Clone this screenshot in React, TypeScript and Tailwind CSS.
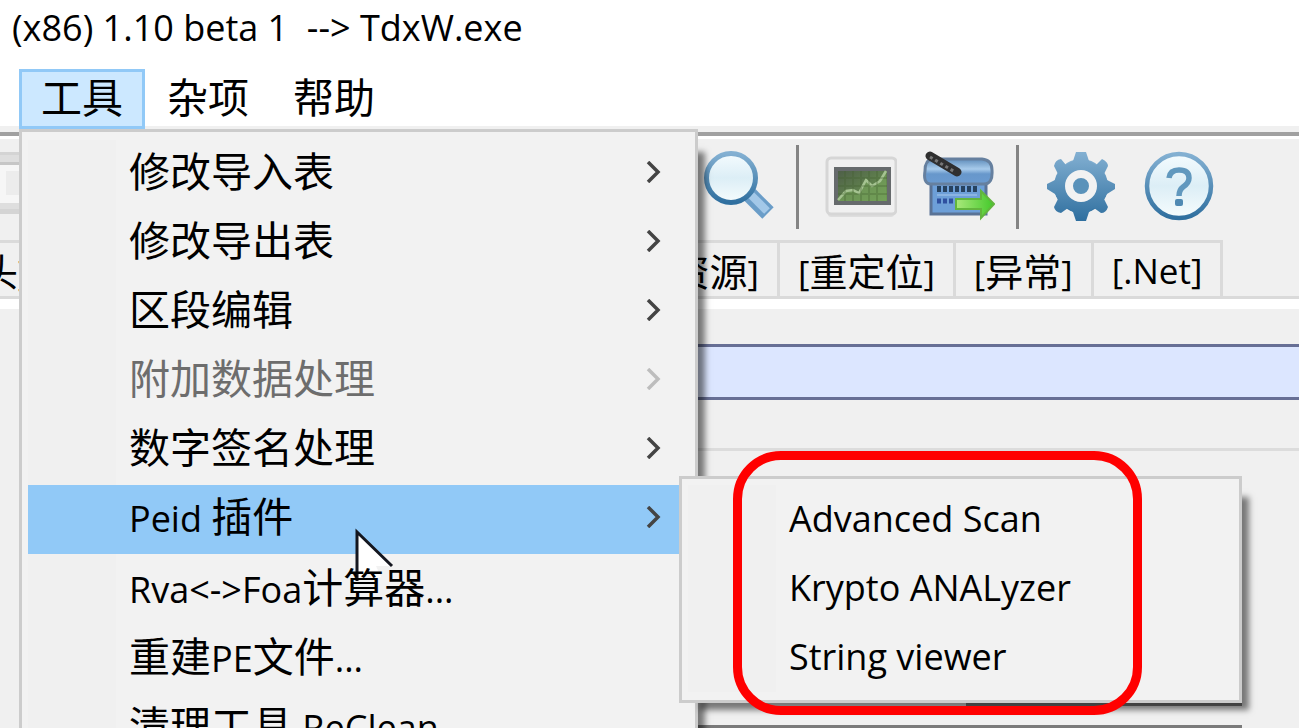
import type { ReactNode } from "react";

type Item = {
  label: string;
  sub?: boolean;
  disabled?: boolean;
  active?: boolean;
};

const MENUS = ["工具", "杂项", "帮助"];

const ITEMS: Item[] = [
  { label: "修改导入表", sub: true },
  { label: "修改导出表", sub: true },
  { label: "区段编辑", sub: true },
  { label: "附加数据处理", sub: true, disabled: true },
  { label: "数字签名处理", sub: true },
  { label: "Peid 插件", sub: true, active: true },
  { label: "Rva<->Foa计算器..." },
  { label: "重建PE文件..." },
  { label: "清理工具 ReClean" },
];

const PLUGINS = ["Advanced Scan", "Krypto ANALyzer", "String viewer"];

// Chinese glyphs are set larger than the latin ones next to them
function Label({ text, cjk = "text-[41px]" }: { text: string; cjk?: string }) {
  return (
    <>
      {text.split(/([\u4e00-\u9fff]+)/).map((part, i) => (
        <span key={i} className={i % 2 ? cjk : undefined}>
          {part}
        </span>
      ))}
    </>
  );
}

function Chevron() {
  return (
    <svg viewBox="0 0 16 22" className="h-[22px] w-4 shrink-0" fill="none" stroke="currentColor" strokeWidth="3.5">
      <path d="M2 1 L12 11 L2 21" />
    </svg>
  );
}

function MenuRow({ item }: { item: Item }) {
  return (
    <button
      disabled={item.disabled}
      className={`flex h-[69px] w-full items-center pr-[27px] text-left ${item.active ? "bg-[#91c9f7]" : ""} ${
        item.disabled ? "text-[#6d6d6d]" : "text-black"
      }`}
    >
      <span className={`mr-[13px] w-[88px] shrink-0 self-stretch ${item.active ? "" : "bg-[#f0f0f0]"}`} />
      <span className={`relative z-20 flex-1 whitespace-pre ${item.sub ? "pb-1.5" : "pb-0.5"}`}>
        <Label text={item.label} />
      </span>
      {item.sub && (
        <span className={`pb-1.5 ${item.disabled ? "text-[#bdbdbd]" : "text-[#444]"}`}>
          <Chevron />
        </span>
      )}
    </button>
  );
}

function ToolButton({ label, children }: { label: string; children: ReactNode }) {
  return (
    <button aria-label={label} className="ml-[26px] shrink-0">
      <svg viewBox="0 0 72 72" className="size-[72px]">
        {children}
      </svg>
    </button>
  );
}

function Separator() {
  return <div className="ml-[21px] h-[84px] w-[3px] shrink-0 bg-[#848484]" />;
}

function Toolbar() {
  return (
    <div className="flex h-[101px] items-center bg-[#f0f0f0] pb-[5px]">
      <svg viewBox="0 0 72 72" className="-ml-[46px] mr-[651px] size-[72px] shrink-0">
        <rect x="2" y="1" width="70" height="62" rx="4" fill="#d4d4d4" />
        <rect x="4" y="4" width="68" height="54" fill="#dedede" />
        <rect x="2" y="11" width="70" height="3" fill="#c6c6c6" />
        <rect x="8" y="14" width="60" height="38" fill="#f6f6f6" />
        <rect x="52" y="20" width="20" height="24" fill="#ececec" />
      </svg>

      <ToolButton label="搜索">
        <defs>
          <linearGradient id="glass" x1="0" y1="0" x2="0" y2="1">
            <stop offset="0" stopColor="#f4fbfe" />
            <stop offset="0.5" stopColor="#dceef6" />
            <stop offset="1" stopColor="#f6fcfd" />
          </linearGradient>
          <linearGradient id="blue" x1="0" y1="0" x2="0" y2="1">
            <stop offset="0" stopColor="#83b0d2" />
            <stop offset="1" stopColor="#2f6f9f" />
          </linearGradient>
        </defs>
        <path d="M45 42 L65 62" stroke="#6a9dc8" strokeWidth="16" />
        <path d="M47 43 L64 60" stroke="#a3c8e8" strokeWidth="8" />
        <circle cx="28" cy="27" r="24.500" fill="url(#glass)" stroke="url(#blue)" strokeWidth="5" />
      </ToolButton>

      <Separator />

      <ToolButton label="熵">
        <defs>
          <linearGradient id="screen" x1="0" y1="0" x2="1" y2="1">
            <stop offset="0" stopColor="#4d5c48" />
            <stop offset="1" stopColor="#6f9f52" />
          </linearGradient>
        </defs>
        <rect x="3" y="52" width="66" height="14" rx="3" fill="#dedede" />
        <rect x="2" y="7" width="69" height="56" rx="4" fill="#f0f0f0" stroke="#d6d6d6" strokeWidth="3" />
        <rect x="11" y="18" width="53" height="34" fill="url(#screen)" stroke="#666a6c" strokeWidth="4" />
        <path d="M13 50 L21 41 L28 39 L34 42 L41 29 L47 35 L55 30 L61 20 V50 Z" fill="#77a35c" fillOpacity="0.6" />
        <path d="M13 49 L21 40 L28 39 L34 42 L41 29 L47 35 L55 30 L61 20" fill="none" stroke="#a5c391" strokeWidth="2.500" />
        <path d="M20 20 V50 M28 20 V50 M36 20 V50 M44 20 V50 M52 20 V50 M13 27 H62 M13 35 H62 M13 43 H62" stroke="#41602f" strokeOpacity="0.3" strokeWidth="2" />
      </ToolButton>

      <ToolButton label="提取">
        <defs>
          <linearGradient id="lid" x1="0" y1="0" x2="0" y2="1">
            <stop offset="0" stopColor="#5f8dbb" />
            <stop offset="0.4" stopColor="#a8cbeb" />
            <stop offset="0.6" stopColor="#6797cb" />
            <stop offset="1" stopColor="#6b9bd0" />
          </linearGradient>
          <linearGradient id="arrow" x1="0" y1="0" x2="1" y2="0">
            <stop offset="0" stopColor="#a9e87b" />
            <stop offset="1" stopColor="#43c92a" />
          </linearGradient>
        </defs>
        <rect x="8" y="26" width="55" height="37" fill="#6d9fd8" stroke="#5a7396" strokeWidth="3" />
        <path d="M9 8 H59 Q69 9 69 19 Q70 33 61 33 H7 Q0 32 2 20 Q2 9 9 8 Z" fill="url(#lid)" stroke="#66809f" strokeWidth="3" />
        <path d="M14 38 H56" stroke="#27425f" strokeWidth="6" strokeDasharray="4 2" />
        <path d="M14 50 H36" stroke="#2f50a0" strokeWidth="5" strokeDasharray="4 2" />
        <path d="M14 44 H54" stroke="#8bb4e2" strokeWidth="2" />
        <path d="M7 5 L34 21" stroke="#2f2f2f" strokeWidth="9" strokeLinecap="round" />
        <path d="M7 6 L32 21" stroke="#777" strokeWidth="3" strokeDasharray="3 3" />
        <path d="M33 48 H58 V40 L71 53 L58 67 V58 H33 Z" fill="url(#arrow)" stroke="#62b53e" strokeWidth="2" />
      </ToolButton>

      <Separator />

      <ToolButton label="设置">
        <circle cx="36" cy="35" r="27" fill="url(#blue)" />
        <path
          d="M31 1 H41 L44 10 L51 14 L57 8 Q63 11 63 15 L59 23 L62 29 L70 33 V38 L62 43 L59 48 L63 56 Q61 62 56 62 L49 57 L44 61 L41 70 H31 L28 61 L23 57 L16 62 Q10 61 9 56 L13 48 L10 43 L2 38 V33 L10 29 L13 23 L9 15 Q10 9 16 8 L21 14 L28 10 Z"
          fill="url(#blue)"
        />
        <circle cx="36" cy="35" r="12" fill="#5a92ba" stroke="#f2f2f2" strokeWidth="8" />
      </ToolButton>

      <ToolButton label="关于">
        <circle cx="36" cy="35" r="32" fill="url(#glass)" stroke="url(#blue)" strokeWidth="4.500" />
        <path d="M26 27 Q27 19 36 19 Q46 19 46 27 Q46 32 40 36 Q36 39 36 45" fill="none" stroke="#6198be" strokeWidth="5.500" />
        <rect x="32" y="48" width="8" height="7" rx="2" fill="#4f89b3" />
      </ToolButton>
    </div>
  );
}

function Tab({ text }: { text: string }) {
  return (
    <button className="flex h-full items-center whitespace-pre border-r-[3px] border-[#dadada] px-[18px] pt-0.5 text-[35px] leading-none">
      <span>
        <Label text={text} cjk="text-[38px]" />
      </span>
    </button>
  );
}

export default function App() {
  return (
    <div className="h-screen overflow-hidden bg-[#f0f0f0] font-['Open_Sans','Noto_Sans_CJK_SC',sans-serif] text-[36px] leading-none text-black">
      <header className="h-[69px] whitespace-pre bg-white pl-3 pt-2.5">(x86) 1.10 beta 1  --&gt; TdxW.exe</header>

      <nav className="relative flex h-[57px] items-start bg-white pl-[19px]">
        {MENUS.map((m, i) => (
          <button
            key={m}
            className={`relative z-10 h-[60px] w-[126px] border-[3px] pb-1 text-[41px] leading-none ${
              i === 0 ? "border-[#91c9f7] bg-[#cce8ff]" : "border-transparent"
            }`}
          >
            {m}
          </button>
        ))}

        {/* 工具 drop-down */}
        <div className="absolute left-[19px] top-[60px] z-20 w-[679px] border-[3px] border-[#cccccc] bg-[#f2f2f2] px-1.5 py-2 shadow-[14px_16px_6px_-7px_rgba(0,0,0,0.5)]">
          {ITEMS.map((item) => (
            <MenuRow key={item.label} item={item} />
          ))}

          <svg viewBox="0 0 40 64" className="absolute left-[332px] top-[395px] z-10 h-16 w-10">
            <path d="M3 5 V54 L14 43 L19 54 L27 50 L22 39 H38 Z" fill="#fff" />
            <path d="M3 54 V5 L38 39" fill="none" stroke="#14161f" strokeWidth="3" />
          </svg>

          <div className="absolute left-[657px] top-[344px] z-30 w-[563px] border-[3px] border-[#cccccc] bg-[#f2f2f2] px-1.5 pb-2 pt-1.5 shadow-[14px_14px_6px_-7px_rgba(0,0,0,0.5)]">
            {PLUGINS.map((p) => (
              <MenuRow key={p} item={{ label: p }} />
            ))}
            <div className="pointer-events-none absolute -top-7 left-[51px] z-30 h-[264px] w-[409px] rounded-[48px] border-[9px] border-[#ff0000]" />
          </div>
        </div>
      </nav>

      <div className="h-1.5" />
      <div className="h-[7px] border-t-4 border-[#a0a0a0] bg-white" />

      <Toolbar />

      <div className="flex h-[59px] items-stretch border-b-[3px] border-[#dadada]">
        <div className="flex border-t-[3px] border-[#dadada]">
          <div className="w-[642px] overflow-hidden border-r-[3px] border-[#dadada]">
            <button className="-ml-5 h-full whitespace-pre pt-0.5 text-[35px] leading-none">
              <Label text="头]" cjk="text-[38px]" />
            </button>
          </div>
          <Tab text="[资源]" />
          <Tab text="[重定位]" />
          <Tab text="[异常]" />
          <Tab text="[.Net]" />
        </div>
      </div>
      <div className="h-2.5 bg-white" />

      <main className="pl-10 pt-[35px]">
        <div className="h-14 border-y-[3px] border-[#676f95] bg-[#dce6ff]" />
        <div className="mt-12 h-[277px] border-t-[3px] border-[#dcdcdc] pt-[252px]">
          <div className="ml-[926px] h-[3px] w-[276px] bg-[#808080]" />
          <div className="mt-[19px] h-[3px] w-[1202px] bg-[#7a7a7a]" />
        </div>
      </main>
    </div>
  );
}
